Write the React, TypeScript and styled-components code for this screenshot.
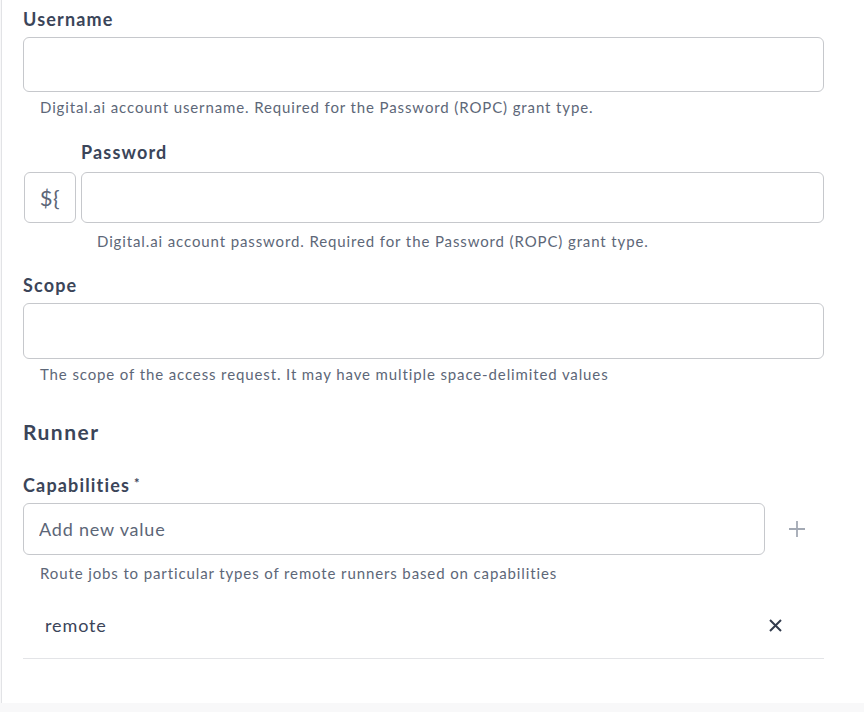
import React from "react";
import styled, { createGlobalStyle } from "styled-components";

const GlobalStyle = createGlobalStyle`
  html, body {
    margin: 0;
    padding: 0;
    background: #f8f8f9;
  }
  body {
    font-family: Lato, "Open Sans", sans-serif;
    color: #3b4559;
    letter-spacing: 0.055em;
  }
`;

const Page = styled.div`
  margin-left: 1px;
  border-left: 1px solid #e2e3e6;
  background: #ffffff;
  min-height: 703px;
  padding: 7px 40px 0 21px;
  box-sizing: border-box;
`;

const Field = styled.div<{ $gap?: number }>`
  display: flex;
  flex-direction: column;
  margin-top: ${(p) => p.$gap ?? 0}px;
`;

const Label = styled.label<{ $below?: number }>`
  font-size: 18px;
  line-height: 24px;
  font-weight: 700;
  letter-spacing: 0.065em;
  color: #3b4559;
  margin-bottom: ${(p) => p.$below ?? 6}px;
`;

const Required = styled.span`
  font-size: 13px;
  vertical-align: top;
  margin-left: 4px;
  line-height: 20px;
`;

const TextInput = styled.input<{ $h: number }>`
  box-sizing: border-box;
  width: 100%;
  height: ${(p) => p.$h}px;
  border: 1px solid #c6c8cc;
  border-radius: 6px;
  background: #ffffff;
  padding: 0 15px;
  font-family: Lato, sans-serif;
  font-size: 18px;
  letter-spacing: 0.045em;
  color: #3b4559;
  outline: none;

  &::placeholder {
    color: #5c6677;
  }
`;

const Help = styled.div<{ $indent: number; $top: number }>`
  font-size: 15px;
  line-height: 20px;
  color: #5d6778;
  padding-left: ${(p) => p.$indent}px;
  margin-top: ${(p) => p.$top}px;
`;

const VarGrid = styled.div`
  display: grid;
  grid-template-columns: 53px 1fr;
  column-gap: 5px;
  margin-top: 23px;
`;

const VarButton = styled.button`
  grid-column: 1;
  grid-row: 2;
  box-sizing: border-box;
  height: 51px;
  margin-left: 1px;
  border: 1px solid #c6c8cc;
  border-radius: 6px;
  background: #ffffff;
  font-family: Lato, sans-serif;
  font-size: 22px;
  letter-spacing: 0.02em;
  color: #5c6677;
  padding: 0;
  cursor: pointer;
`;

const GridCell = styled.div<{ $row: number }>`
  grid-column: 2;
  grid-row: ${(p) => p.$row};
  display: flex;
  flex-direction: column;
`;

const Section = styled.h2`
  margin: 34px 0 0;
  font-size: 21px;
  line-height: 28px;
  font-weight: 700;
  letter-spacing: 0.07em;
  color: #3b4559;
`;

const AddRow = styled.div`
  display: flex;
  align-items: center;
`;

const AddButton = styled.button`
  width: 59px;
  flex: none;
  border: none;
  background: transparent;
  padding: 0 0 0 23px;
  display: flex;
  justify-content: flex-start;
  color: #a3a9b4;
  cursor: pointer;
`;

const ListRow = styled.div`
  display: flex;
  align-items: center;
  justify-content: space-between;
  margin-top: 18px;
  padding: 12px 42px 21px 22px;
  border-bottom: 1px solid #e3e4e7;
  font-size: 18px;
  line-height: 24px;
  color: #3b4559;
`;

const RemoveButton = styled.button`
  border: none;
  background: transparent;
  padding: 0;
  display: flex;
  color: #333c4e;
  cursor: pointer;
`;

export default function App() {
  return (
    <>
      <GlobalStyle />
      <Page>
        <Field>
          <Label>Username</Label>
          <TextInput $h={55} />
          <Help $indent={17} $top={5}>
            Digital.ai account username. Required for the Password (ROPC) grant type.
          </Help>
        </Field>

        <VarGrid>
          <GridCell $row={1}>
            <Label $below={8}>Password</Label>
          </GridCell>
          <VarButton>{"${"}</VarButton>
          <GridCell $row={2}>
            <TextInput $h={51} type="password" />
          </GridCell>
          <GridCell $row={3}>
            <Help $indent={16} $top={8}>
              Digital.ai account password. Required for the Password (ROPC) grant type.
            </Help>
          </GridCell>
        </VarGrid>

        <Field $gap={22}>
          <Label>Scope</Label>
          <TextInput $h={56} />
          <Help $indent={17} $top={5}>
            The scope of the access request. It may have multiple space-delimited values
          </Help>
        </Field>

        <Section>Runner</Section>

        <Field $gap={27}>
          <Label>
            Capabilities<Required>*</Required>
          </Label>
          <AddRow>
            <TextInput $h={52} placeholder="Add new value" />
            <AddButton aria-label="Add">
              <svg width="18" height="18" viewBox="0 0 18 18" fill="none">
                <path d="M9 1v16M1 9h16" stroke="currentColor" strokeWidth="1.8" />
              </svg>
            </AddButton>
          </AddRow>
          <Help $indent={17} $top={8}>
            Route jobs to particular types of remote runners based on capabilities
          </Help>
          <ListRow>
            <span>remote</span>
            <RemoveButton aria-label="Remove">
              <svg width="13" height="13" viewBox="0 0 13 13" fill="none">
                <path d="M1 1l11 11M12 1L1 12" stroke="currentColor" strokeWidth="2" />
              </svg>
            </RemoveButton>
          </ListRow>
        </Field>
      </Page>
    </>
  );
}
